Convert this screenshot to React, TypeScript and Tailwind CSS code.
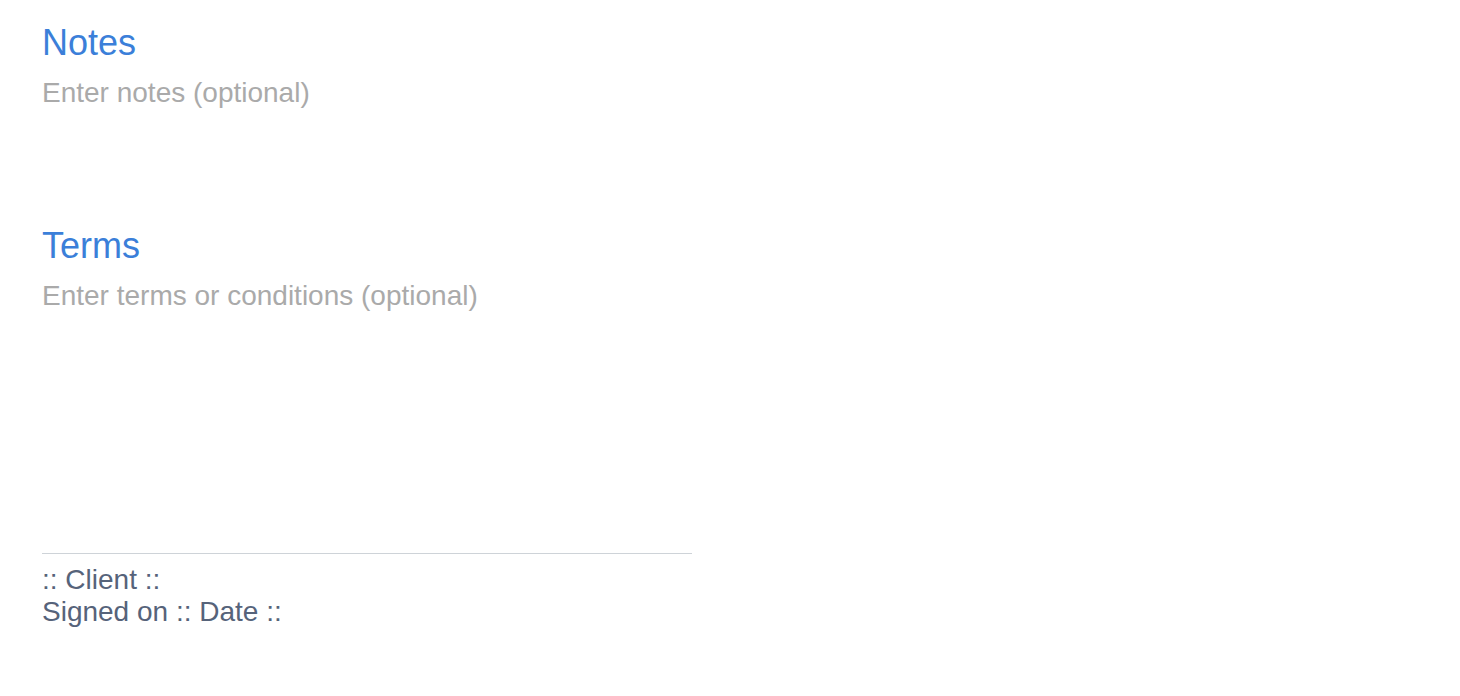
import React from 'react';

interface FieldProps {
  label: string;
  placeholder: string;
  heightClass: string;
}

function TextField({ label, placeholder, heightClass }: FieldProps) {
  return (
    <div className="flex flex-col">
      <label className="text-[36px] leading-[40px] text-[#3b7fd9]">{label}</label>
      <textarea
        placeholder={placeholder}
        className={`mt-[14px] w-full resize-none bg-transparent text-[28px] leading-[32px] text-[#333] placeholder:text-[#aaaaaa] outline-none ${heightClass}`}
      />
    </div>
  );
}

export default function App() {
  return (
    <div
      className="min-h-[696px] w-full bg-white px-[42px] pt-[23px]"
      style={{ fontFamily: '"Liberation Sans", Arial, sans-serif' }}
    >
      <div className="w-[650px]">
        <TextField label="Notes" placeholder="Enter notes (optional)" heightClass="h-[149px]" />
        <TextField label="Terms" placeholder="Enter terms or conditions (optional)" heightClass="h-[273px]" />

        {/* Signature block */}
        <div className="border-t-[1.5px] border-[#ced3d8] pt-[10px] text-[28px] leading-[32px] text-[#56637a]">
          <div>:: Client ::</div>
          <div>Signed on :: Date ::</div>
        </div>
      </div>
    </div>
  );
}
